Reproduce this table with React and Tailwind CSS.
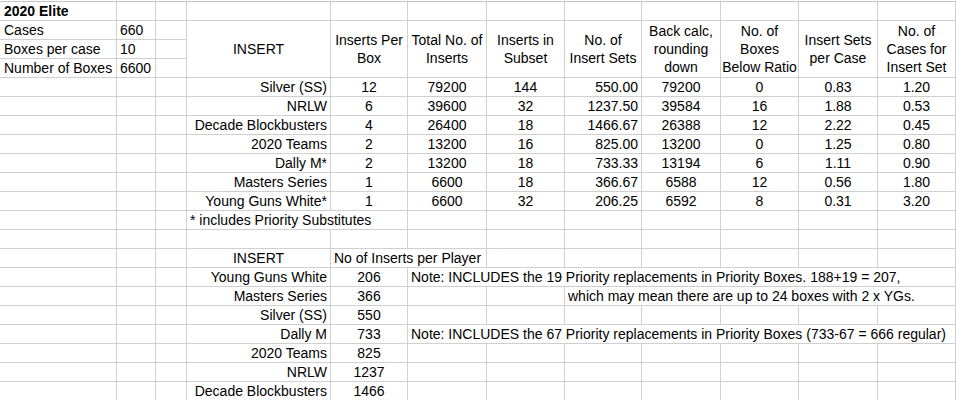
import React from "react";

const B = "border-r border-b border-[#d0d0d0] px-[3px] whitespace-nowrap flex items-center";

function C({ a = "l", children, cls = "" }) {
  const j = a === "c" ? "justify-center" : a === "r" ? "justify-end" : "justify-start";
  return <div className={`${B} ${j} ${cls}`}>{children}</div>;
}

const data = [
  ["Silver (SS)", "12", "79200", "144", "550.00", "79200", "0", "0.83", "1.20"],
  ["NRLW", "6", "39600", "32", "1237.50", "39584", "16", "1.88", "0.53"],
  ["Decade Blockbusters", "4", "26400", "18", "1466.67", "26388", "12", "2.22", "0.45"],
  ["2020 Teams", "2", "13200", "16", "825.00", "13200", "0", "1.25", "0.80"],
  ["Dally M*", "2", "13200", "18", "733.33", "13194", "6", "1.11", "0.90"],
  ["Masters Series", "1", "6600", "18", "366.67", "6588", "12", "0.56", "1.80"],
  ["Young Guns White*", "1", "6600", "32", "206.25", "6592", "8", "0.31", "3.20"],
];

const players = [
  ["Young Guns White", "206", "note1"],
  ["Masters Series", "366", "note2"],
  ["Silver (SS)", "550", ""],
  ["Dally M", "733", "note3"],
  ["2020 Teams", "825", ""],
  ["NRLW", "1237", ""],
  ["Decade Blockbusters", "1466", ""],
];

function Empty({ n }) {
  return Array.from({ length: n }).map((_, i) => <C key={i} />);
}

function Hdr({ lines }) {
  return (
    <div className={`${B} row-span-3 justify-center text-center`}>
      <div>
        {lines.map((l, i) => (
          <div key={i}>{l}</div>
        ))}
      </div>
    </div>
  );
}

export default function App() {
  return (
    <div className="w-[956px] h-[400px] overflow-hidden bg-white pt-px font-['Liberation_Sans',Arial,sans-serif] text-[14px] leading-[18px] text-black">
      <div className="grid grid-cols-[117px_39px_31px_144px_77px_79px_78px_77px_79px_78px_79px_78px] auto-rows-[19px] border-t border-[#c4c4c4]">
        {/* Row 1 */}
        <C cls="font-bold pl-[4px]">2020 Elite</C>
        <Empty n={11} />

        {/* Row 2 */}
        <C cls="pl-[4px]">Cases</C>
        <C>660</C>
        <C />
        <div className={`${B} row-span-3 justify-center`}>INSERT</div>
        <Hdr lines={["Inserts Per", "Box"]} />
        <Hdr lines={["Total No. of", "Inserts"]} />
        <Hdr lines={["Inserts in", "Subset"]} />
        <Hdr lines={["No. of", "Insert Sets"]} />
        <Hdr lines={["Back calc,", "rounding", "down"]} />
        <Hdr lines={["No. of", "Boxes", "Below Ratio"]} />
        <Hdr lines={["Insert Sets", "per Case"]} />
        <Hdr lines={["No. of", "Cases for", "Insert Set"]} />

        {/* Row 3 */}
        <C cls="pl-[4px]">Boxes per case</C>
        <C>10</C>
        <C />
        {/* Row 4 */}
        <C cls="pl-[4px]">Number of Boxes</C>
        <C>6600</C>
        <C />

        {/* Data rows */}
        {data.map((r, i) => (
          <React.Fragment key={i}>
            <C />
            <C />
            <C />
            <C a="r">{r[0]}</C>
            <C a="c">{r[1]}</C>
            <C a="c">{r[2]}</C>
            <C a="c">{r[3]}</C>
            <C a="r">{r[4]}</C>
            <C a="c">{r[5]}</C>
            <C a="c">{r[6]}</C>
            <C a="c">{r[7]}</C>
            <C a="c">{r[8]}</C>
          </React.Fragment>
        ))}

        {/* Footnote row */}
        <C />
        <C />
        <C />
        <C cls="col-span-2">* includes Priority Substitutes</C>
        <Empty n={7} />

        {/* Empty row */}
        <Empty n={12} />

        {/* Second table header */}
        <C />
        <C />
        <C />
        <C a="c">INSERT</C>
        <C cls="col-span-2">No of Inserts per Player</C>
        <Empty n={6} />

        {players.map((p, i) => (
          <React.Fragment key={i}>
            <C />
            <C />
            <C />
            <C a="r">{p[0]}</C>
            <C a="c">{p[1]}</C>
            {p[2] === "note1" && (
              <C cls="col-span-7">
                Note: INCLUDES the 19 Priority replacements in Priority Boxes. 188+19 = 207,
              </C>
            )}
            {p[2] === "note2" && (
              <>
                <C />
                <C />
                <C cls="col-span-5">which may mean there are up to 24 boxes with 2 x YGs.</C>
              </>
            )}
            {p[2] === "note3" && (
              <C cls="col-span-7">
                Note: INCLUDES the 67 Priority replacements in Priority Boxes (733-67 = 666 regular)
              </C>
            )}
            {p[2] === "" && <Empty n={7} />}
          </React.Fragment>
        ))}
      </div>
    </div>
  );
}
